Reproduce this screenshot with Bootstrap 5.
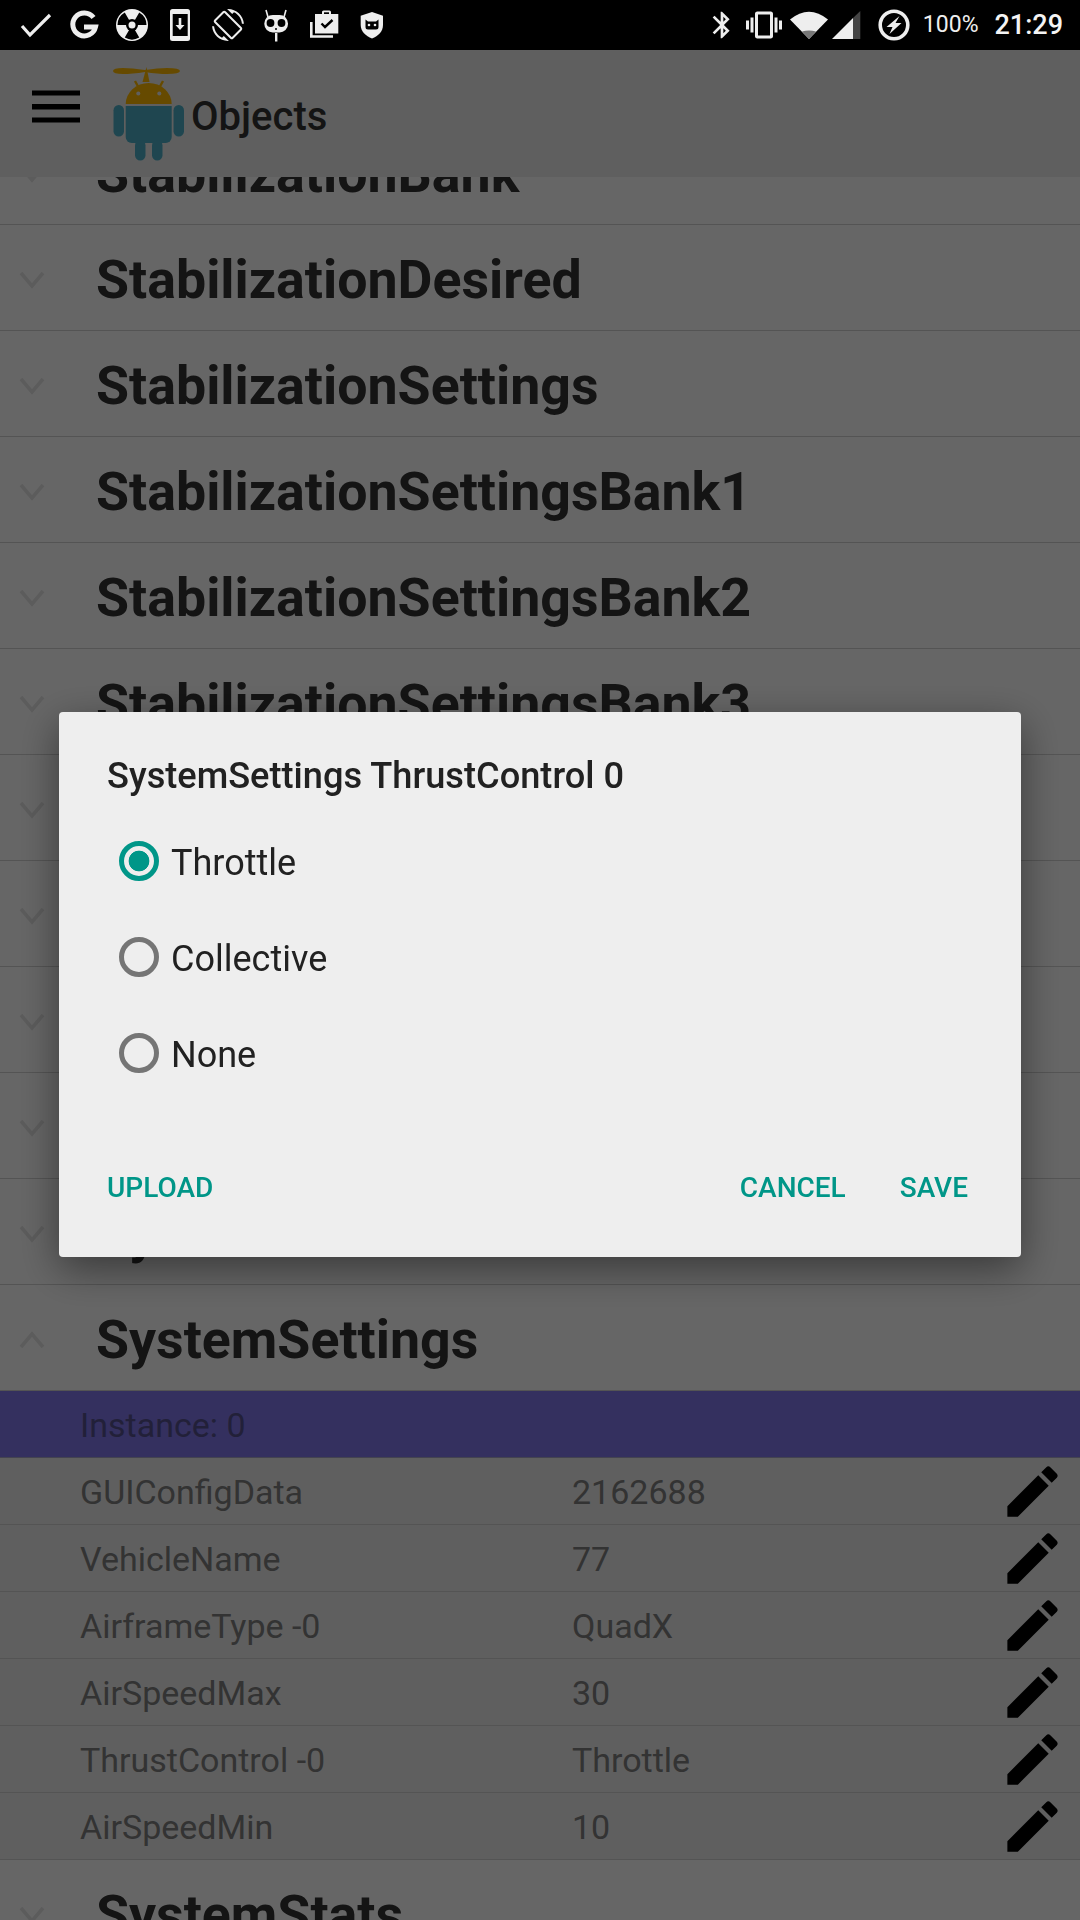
<!DOCTYPE html>
<html lang="en">
<head>
<meta charset="utf-8">
<title>Objects</title>
<link href="https://cdn.jsdelivr.net/npm/bootstrap@5.3.0/dist/css/bootstrap.min.css" rel="stylesheet">
<script src="https://cdn.jsdelivr.net/npm/bootstrap@5.3.0/dist/js/bootstrap.bundle.min.js"></script>
<style>
html,body{height:1920px;overflow:hidden;background:#fff;font-family:Roboto,"Liberation Sans",sans-serif}
.app-shell{height:1920px}
.status-bar{height:50px;background:#000;position:relative;z-index:1060;color:#eee;padding-left:12px;padding-right:17px}
.status-bar svg{display:block;flex:none}
.status-pct{font-size:23px;margin-left:13px}
.status-time{font-size:27px;font-weight:500;margin-left:16px;color:#f4f4f4}
.app-toolbar{height:127px;background:#eee;position:relative;z-index:2;padding-left:32px}
.app-toolbar svg{flex:none;display:block}
.logo-mark{margin-left:30px}
.app-title{font-size:40px;font-weight:500;color:#333;margin-left:5px;margin-top:7px}
.list-clip{overflow:hidden;min-height:0}
.list-scroll{margin-top:-58px}
.obj-row{height:106px;border-bottom:1px solid #d3d3d3;background:#fff;padding-left:19px;padding-top:5px}
.obj-row svg{flex:none;display:block}
.obj-name{font-size:53.7px;font-weight:700;color:#333;margin-left:51px;line-height:1;white-space:nowrap}
.inst-row{height:67px;background:#8279ee;border-bottom:1px solid #a8a8c8;padding-left:80px;padding-top:2px;font-size:34px;color:#55528f}
.field-row{height:67px;background:#eee;border-bottom:1px solid #d3d3d3;padding-left:80px;font-size:34px;color:#808080}
.field-key{width:492px;padding-top:2px}
.field-val{padding-top:2px}
.field-icon{display:block;flex:none;margin-right:14px}
.modal-backdrop.dim-layer{opacity:.6}
.dlg-dialog{max-width:962px;margin:712px 0 0 59px}
.dlg-content{height:545px;background:#eee;border:0;border-radius:4px;box-shadow:0 12px 40px rgba(0,0,0,.45);padding:42px 48px 0}
.dlg-title{font-size:36.2px;font-weight:500;color:#212121;line-height:1.2;margin:0}
.dlg-options{margin-top:16px;margin-left:12px}
.dlg-option{height:96px;padding:0;margin:0;gap:12px}
.dlg-option .form-check-input{width:40px;height:40px;margin:0;float:none;background:none;border:5px solid #757575;flex:none}
.dlg-option .form-check-input:checked{border-color:#009688;background:radial-gradient(circle,#009688 0 10px,transparent 10.7px)}
.dlg-option .form-check-label{font-size:36px;color:#212121;opacity:1;margin-top:3px}
.dlg-actions{margin-top:auto;height:69px;margin-bottom:35px;padding-right:5px;gap:54px}
.dlg-btn{font-size:28px;font-weight:500;color:#009688;padding:0;border:0;border-radius:0;line-height:1.2}
</style>
</head>
<body>
<div class="app-shell d-flex flex-column">
  <div class="status-bar d-flex align-items-center flex-shrink-0">
    <svg width="48" height="50" viewBox="12 0 48 50"><path d="M22 26l8 9L50 15" fill="none" stroke="#eee" stroke-width="3.2"/></svg>
    <svg width="48" height="50" viewBox="60 0 48 50"><path d="M93.5 17.5A11.5 11.5 0 1 0 95.5 27H84" fill="none" stroke="#eee" stroke-width="5"/></svg>
    <svg width="48" height="50" viewBox="108 0 48 50"><circle cx="132" cy="25" r="16" fill="#eee"/><path d="M132 25L124.75 12.44A14.5 14.5 0 0 0 117.5 25ZM132 25H146.5A14.5 14.5 0 0 0 139.25 12.44ZM132 25L124.75 37.56A14.5 14.5 0 0 0 139.25 37.56Z" fill="#000"/><circle cx="132" cy="25" r="6" fill="#000"/><circle cx="132" cy="25" r="3.5" fill="#eee"/></svg>
    <svg width="48" height="50" viewBox="156 0 48 50"><rect x="170" y="9" width="20" height="32" rx="2.5" fill="#eee"/><rect x="172.7" y="14" width="15" height="22" fill="#000"/><path d="M178.7 18h2.6v7h3.2l-4.5 5-4.5-5h3.2z" fill="#eee"/></svg>
    <svg width="48" height="50" viewBox="204 0 48 50"><svg x="212" y="9" width="32" height="32" viewBox="0 0 24 24"><path fill="#eee" d="M16.48 2.52c3.27 1.55 5.61 4.72 5.97 8.48h1.5C23.44 4.84 18.29 0 12 0l-.66.03 3.81 3.81 1.33-1.32zm-6.25-.77c-.59-.59-1.54-.59-2.12 0L1.75 8.11c-.59.59-.59 1.54 0 2.12l12.02 12.02c.59.59 1.54.59 2.12 0l6.36-6.36c.59-.59.59-1.54 0-2.12L10.23 1.75zm4.6 19.44L2.81 9.17l6.36-6.36 12.02 12.02-6.36 6.36zm-7.31.29C4.25 19.94 1.91 16.76 1.55 13H.05C.56 19.16 5.71 24 12 24l.66-.03-3.81-3.81-1.33 1.32z"/></svg></svg>
    <svg width="48" height="50" viewBox="252 0 48 50"><path d="M266 10l2 7M286 10l-2 7" stroke="#eee" stroke-width="1.6" fill="none"/><rect x="264.3" y="15" width="23.7" height="17.5" rx="8.500" fill="#eee"/><circle cx="270.5" cy="23" r="3.900" fill="#000"/><circle cx="281.5" cy="23" r="3.900" fill="#000"/><circle cx="276" cy="29" r="1" fill="#000"/><rect x="275" y="33" width="2.4" height="8.5" fill="#eee"/></svg>
    <svg width="48" height="50" viewBox="300 0 48 50"><path d="M311.3 22v14.5H333" fill="none" stroke="#eee" stroke-width="2.6"/><path d="M322 14v-2a1.6 1.6 0 0 1 1.6-1.6h5.8a1.6 1.6 0 0 1 1.6 1.6v2h7.3v19.4H315V14z" fill="#eee"/><rect x="324" y="12.3" width="5" height="1.7" fill="#000"/><path d="M321.5 23.5l3.5 3.5 7.5-7" fill="none" stroke="#000" stroke-width="2.4"/></svg>
    <svg width="48" height="50" viewBox="348 0 48 50"><path d="M372 12l-11.3 3.8V25c0 6.5 5 11 11.3 13.5C378.300 36 383 31.500 383 25v-9.200z" fill="#eee"/><path d="M365.500 19.500l2.500 2h8l2.500-2V27a2.500 2.500 0 0 1-2.500 2.500h-8a2.500 2.500 0 0 1-2.500-2.500z" fill="#000"/><circle cx="369" cy="25" r="1.300" fill="#eee"/><circle cx="375" cy="25" r="1.300" fill="#eee"/></svg>
    <div class="flex-grow-1"></div>
    <svg width="32" height="32" viewBox="0 0 24 24"><path fill="#eee" d="M17.71 7.71L12 2h-1v7.59L6.41 5 5 6.41 10.59 12 5 17.59 6.41 19 11 14.41V22h1l5.71-5.71-4.3-4.29 4.3-4.29zM13 5.830l1.880 1.880L13 9.590V5.830zm1.880 10.460L13 18.170v-3.760l1.880 1.880z"/></svg>
    <svg class="ms-2" width="36" height="36" viewBox="0 0 24 24"><path fill="#eee" d="M0 15h2V9H0v6zm3 2h2V7H3v10zm19-8v6h2V9h-2zm-3 8h2V7h-2v10zM16.500 3h-9C6.670 3 6 3.670 6 4.500v15c0 .83.67 1.500 1.500 1.500h9c.83 0 1.500-.67 1.500-1.500v-15c0-.83-.67-1.500-1.500-1.500zM16 19H8V5h8v14z"/></svg>
    <svg class="ms-2" width="72" height="50" viewBox="792 0 72 50"><path d="M811 39L792 19.500Q811 4 830 19.500Z" fill="#eee"/><path d="M811 39l-7-7.500q7-2 14 0z" fill="#777"/><path d="M834 39l21-21v21z" fill="#eee"/><path d="M855 18l7.300-7v28H855z" fill="#444"/></svg>
    <svg class="ms-3" width="32" height="50" viewBox="878.500 0 32 50"><circle cx="894.500" cy="25" r="13.800" fill="none" stroke="#eee" stroke-width="3.600"/><path d="M900 16L887 27h6l-3 7 12-11h-6z" fill="#eee"/></svg>
    <span class="status-pct">100%</span>
    <span class="status-time">21:29</span>
  </div>
  <div class="app-toolbar d-flex align-items-center flex-shrink-0">
    <svg width="48" height="80" viewBox="32 73.500 48 80"><path d="M32 90h48v5H32zM32 103.500h48v5.500H32zM32 117h48v5H32z" fill="#000"/></svg>
    <svg class="logo-mark" width="76" height="105" viewBox="110 61 76 105"><path d="M113 71q0-3 10-3 9 0 22 2 13-2 22-2 13 0 13 3t-13 3q-9 0-22-2-13 2-22 2-10 0-10-3z" fill="#ffba00"/><path d="M146.500 67l3 15h-7z" fill="#ffba00"/><path d="M135 81l5 9M163 81l-5 9" stroke="#ffba00" stroke-width="2.400"/><path d="M125.700 104a23 21 0 0 1 46 0z" fill="#ffba00"/><circle cx="138.300" cy="93.500" r="2" fill="#eee"/><circle cx="159.300" cy="93.500" r="2" fill="#eee"/><path d="M125.700 106h46v31a6 6 0 0 1-6 6h-34a6 6 0 0 1-6-6z" fill="#4eb0c8"/><rect x="113.500" y="105" width="10.500" height="31.500" rx="5.200" fill="#4eb0c8"/><rect x="173.500" y="105" width="10.500" height="31.500" rx="5.200" fill="#4eb0c8"/><rect x="135" y="140" width="10.500" height="20.500" rx="5.200" fill="#4eb0c8"/><rect x="152" y="140" width="10.500" height="20.500" rx="5.200" fill="#4eb0c8"/></svg>
    <span class="app-title">Objects</span>
  </div>
  <div class="list-clip flex-grow-1">
    <div class="list-scroll">
      <div class="obj-row d-flex align-items-center"><svg width="26" height="20" viewBox="0 0 26 20"><path d="M2 3l11 13L24 3" fill="none" stroke="#e6e6e6" stroke-width="3.500"/></svg><span class="obj-name">StabilizationBank</span></div>
      <div class="obj-row d-flex align-items-center"><svg width="26" height="20" viewBox="0 0 26 20"><path d="M2 3l11 13L24 3" fill="none" stroke="#e6e6e6" stroke-width="3.500"/></svg><span class="obj-name">StabilizationDesired</span></div>
      <div class="obj-row d-flex align-items-center"><svg width="26" height="20" viewBox="0 0 26 20"><path d="M2 3l11 13L24 3" fill="none" stroke="#e6e6e6" stroke-width="3.500"/></svg><span class="obj-name">StabilizationSettings</span></div>
      <div class="obj-row d-flex align-items-center"><svg width="26" height="20" viewBox="0 0 26 20"><path d="M2 3l11 13L24 3" fill="none" stroke="#e6e6e6" stroke-width="3.500"/></svg><span class="obj-name">StabilizationSettingsBank1</span></div>
      <div class="obj-row d-flex align-items-center"><svg width="26" height="20" viewBox="0 0 26 20"><path d="M2 3l11 13L24 3" fill="none" stroke="#e6e6e6" stroke-width="3.500"/></svg><span class="obj-name">StabilizationSettingsBank2</span></div>
      <div class="obj-row d-flex align-items-center"><svg width="26" height="20" viewBox="0 0 26 20"><path d="M2 3l11 13L24 3" fill="none" stroke="#e6e6e6" stroke-width="3.500"/></svg><span class="obj-name">StabilizationSettingsBank3</span></div>
      <div class="obj-row d-flex align-items-center"><svg width="26" height="20" viewBox="0 0 26 20"><path d="M2 3l11 13L24 3" fill="none" stroke="#e6e6e6" stroke-width="3.500"/></svg></div>
      <div class="obj-row d-flex align-items-center"><svg width="26" height="20" viewBox="0 0 26 20"><path d="M2 3l11 13L24 3" fill="none" stroke="#e6e6e6" stroke-width="3.500"/></svg></div>
      <div class="obj-row d-flex align-items-center"><svg width="26" height="20" viewBox="0 0 26 20"><path d="M2 3l11 13L24 3" fill="none" stroke="#e6e6e6" stroke-width="3.500"/></svg></div>
      <div class="obj-row d-flex align-items-center"><svg width="26" height="20" viewBox="0 0 26 20"><path d="M2 3l11 13L24 3" fill="none" stroke="#e6e6e6" stroke-width="3.500"/></svg></div>
      <div class="obj-row d-flex align-items-center"><svg width="26" height="20" viewBox="0 0 26 20"><path d="M2 3l11 13L24 3" fill="none" stroke="#e6e6e6" stroke-width="3.500"/></svg><span class="obj-name">SystemAlarms</span></div>
      <div class="obj-row d-flex align-items-center"><svg width="26" height="20" viewBox="0 0 26 20"><path d="M2 17L13 4l11 13" fill="none" stroke="#e6e6e6" stroke-width="3.500"/></svg><span class="obj-name">SystemSettings</span></div>
      <div class="inst-row d-flex align-items-center">Instance: 0</div>
      <div class="field-row d-flex align-items-center"><span class="field-key">GUIConfigData</span><span class="field-val flex-grow-1">2162688</span><svg class="field-icon" width="67" height="67" viewBox="0 0 24 24"><path d="M3 17.250V21h3.750L17.810 9.940l-3.750-3.750L3 17.250zM20.710 7.040c.39-.39.39-1.020 0-1.410l-2.340-2.340c-.39-.39-1.020-.39-1.410 0l-1.830 1.830 3.750 3.750 1.830-1.830z"/></svg></div>
      <div class="field-row d-flex align-items-center"><span class="field-key">VehicleName</span><span class="field-val flex-grow-1">77</span><svg class="field-icon" width="67" height="67" viewBox="0 0 24 24"><path d="M3 17.250V21h3.750L17.810 9.940l-3.750-3.750L3 17.250zM20.710 7.040c.39-.39.39-1.020 0-1.410l-2.340-2.340c-.39-.39-1.020-.39-1.410 0l-1.830 1.830 3.750 3.750 1.830-1.830z"/></svg></div>
      <div class="field-row d-flex align-items-center"><span class="field-key">AirframeType -0</span><span class="field-val flex-grow-1">QuadX</span><svg class="field-icon" width="67" height="67" viewBox="0 0 24 24"><path d="M3 17.250V21h3.750L17.810 9.940l-3.750-3.750L3 17.250zM20.710 7.040c.39-.39.39-1.020 0-1.410l-2.340-2.340c-.39-.39-1.020-.39-1.410 0l-1.830 1.830 3.750 3.750 1.830-1.830z"/></svg></div>
      <div class="field-row d-flex align-items-center"><span class="field-key">AirSpeedMax</span><span class="field-val flex-grow-1">30</span><svg class="field-icon" width="67" height="67" viewBox="0 0 24 24"><path d="M3 17.250V21h3.750L17.810 9.940l-3.750-3.750L3 17.250zM20.710 7.040c.39-.39.39-1.020 0-1.410l-2.340-2.340c-.39-.39-1.020-.39-1.410 0l-1.830 1.830 3.750 3.750 1.830-1.830z"/></svg></div>
      <div class="field-row d-flex align-items-center"><span class="field-key">ThrustControl -0</span><span class="field-val flex-grow-1">Throttle</span><svg class="field-icon" width="67" height="67" viewBox="0 0 24 24"><path d="M3 17.250V21h3.750L17.810 9.940l-3.750-3.750L3 17.250zM20.710 7.040c.39-.39.39-1.020 0-1.410l-2.340-2.340c-.39-.39-1.020-.39-1.410 0l-1.830 1.830 3.750 3.750 1.830-1.830z"/></svg></div>
      <div class="field-row d-flex align-items-center"><span class="field-key">AirSpeedMin</span><span class="field-val flex-grow-1">10</span><svg class="field-icon" width="67" height="67" viewBox="0 0 24 24"><path d="M3 17.250V21h3.750L17.810 9.940l-3.750-3.750L3 17.250zM20.710 7.040c.39-.39.39-1.020 0-1.410l-2.340-2.340c-.39-.39-1.020-.39-1.410 0l-1.830 1.830 3.750 3.750 1.830-1.830z"/></svg></div>
      <div class="obj-row d-flex align-items-center"><svg width="26" height="20" viewBox="0 0 26 20"><path d="M2 3l11 13L24 3" fill="none" stroke="#e6e6e6" stroke-width="3.500"/></svg><span class="obj-name">SystemStats</span></div>
    </div>
  </div>
</div>
<div class="modal-backdrop show dim-layer"></div>
<div class="modal d-block" role="dialog">
  <div class="modal-dialog dlg-dialog">
    <div class="modal-content dlg-content d-flex flex-column">
      <h5 class="dlg-title">SystemSettings ThrustControl 0</h5>
      <div class="dlg-options">
        <div class="form-check dlg-option d-flex align-items-center"><input class="form-check-input" type="radio" name="tc" id="o1" checked><label class="form-check-label" for="o1">Throttle</label></div>
        <div class="form-check dlg-option d-flex align-items-center"><input class="form-check-input" type="radio" name="tc" id="o2"><label class="form-check-label" for="o2">Collective</label></div>
        <div class="form-check dlg-option d-flex align-items-center"><input class="form-check-input" type="radio" name="tc" id="o3"><label class="form-check-label" for="o3">None</label></div>
      </div>
      <div class="dlg-actions d-flex align-items-center">
        <button type="button" class="btn dlg-btn me-auto">UPLOAD</button>
        <button type="button" class="btn dlg-btn">CANCEL</button>
        <button type="button" class="btn dlg-btn">SAVE</button>
      </div>
    </div>
  </div>
</div>
</body>
</html>
